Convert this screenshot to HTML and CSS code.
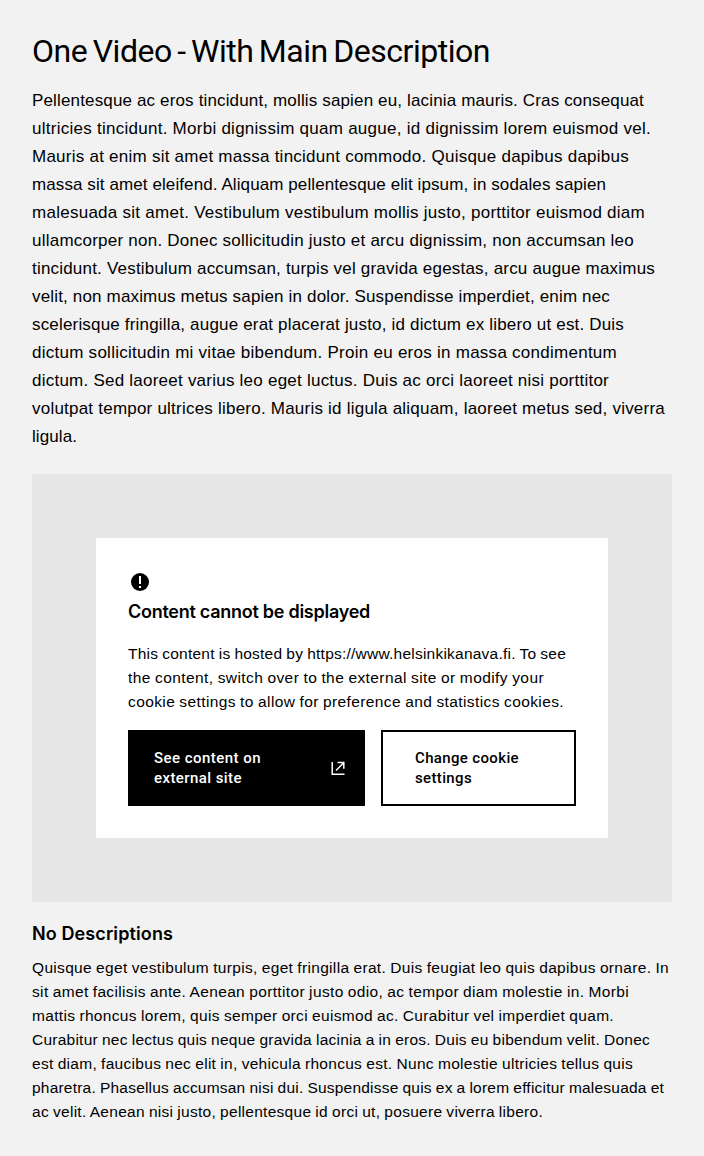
FILE: index.html
```
<!DOCTYPE html>
<html lang="en">
<head>
<meta charset="utf-8">
<title>One Video - With Main Description</title>
<link rel="stylesheet" href="styles.css">
</head>
<body>
<main class="page">
  <h1 class="title"><span class="line" data-width="458">One Video - With Main Description</span></h1>
  <p class="lead">
    <span class="line" data-width="612">Pellentesque ac eros tincidunt, mollis sapien eu, lacinia mauris. Cras consequat</span>
    <span class="line" data-width="619">ultricies tincidunt. Morbi dignissim quam augue, id dignissim lorem euismod vel.</span>
    <span class="line" data-width="597">Mauris at enim sit amet massa tincidunt commodo. Quisque dapibus dapibus</span>
    <span class="line" data-width="574">massa sit amet eleifend. Aliquam pellentesque elit ipsum, in sodales sapien</span>
    <span class="line" data-width="613">malesuada sit amet. Vestibulum vestibulum mollis justo, porttitor euismod diam</span>
    <span class="line" data-width="602">ullamcorper non. Donec sollicitudin justo et arcu dignissim, non accumsan leo</span>
    <span class="line" data-width="623">tincidunt. Vestibulum accumsan, turpis vel gravida egestas, arcu augue maximus</span>
    <span class="line" data-width="578">velit, non maximus metus sapien in dolor. Suspendisse imperdiet, enim nec</span>
    <span class="line" data-width="592">scelerisque fringilla, augue erat placerat justo, id dictum ex libero ut est. Duis</span>
    <span class="line" data-width="585">dictum sollicitudin mi vitae bibendum. Proin eu eros in massa condimentum</span>
    <span class="line" data-width="577">dictum. Sed laoreet varius leo eget luctus. Duis ac orci laoreet nisi porttitor</span>
    <span class="line" data-width="633">volutpat tempor ultrices libero. Mauris id ligula aliquam, laoreet metus sed, viverra</span>
    <span class="line" data-width="45">ligula.</span>
  </p>
  <section class="video">
    <div class="notice">
      <svg class="notice-icon" viewBox="0 0 24 24" aria-hidden="true"><circle cx="12" cy="12" r="9"/><path d="M11 6h2v8h-2zM11 16h2v2h-2z" fill="#fff"/></svg>
      <h2 class="notice-title"><span class="line" data-width="242">Content cannot be displayed</span></h2>
      <p class="text notice-text">
        <span class="line" data-width="438">This content is hosted by https://www.helsinkikanava.fi. To see</span>
        <span class="line" data-width="416">the content, switch over to the external site or modify your</span>
        <span class="line" data-width="436">cookie settings to allow for preference and statistics cookies.</span>
      </p>
      <div class="actions">
        <a class="button button-primary">
          <span class="label"><span class="line" data-width="107">See content on</span><span class="line" data-width="88">external site</span></span>
          <svg class="link-icon" viewBox="0 0 14 14" aria-hidden="true"><path d="M1.2 1v12.2h12.3M5 9.5l7.5-7.5M6.5 1.6h6.3v6.2"/></svg>
        </a>
        <button class="button button-secondary">
          <span class="label"><span class="line" data-width="104">Change cookie</span><span class="line" data-width="57">settings</span></span>
        </button>
      </div>
    </div>
  </section>
  <h2 class="subtitle"><span class="line" data-width="141">No Descriptions</span></h2>
  <p class="text">
    <span class="line" data-width="637">Quisque eget vestibulum turpis, eget fringilla erat. Duis feugiat leo quis dapibus ornare. In</span>
    <span class="line" data-width="597">sit amet facilisis ante. Aenean porttitor justo odio, ac tempor diam molestie in. Morbi</span>
    <span class="line" data-width="582">mattis rhoncus lorem, quis semper orci euismod ac. Curabitur vel imperdiet quam.</span>
    <span class="line" data-width="618">Curabitur nec lectus quis neque gravida lacinia a in eros. Duis eu bibendum velit. Donec</span>
    <span class="line" data-width="601">est diam, faucibus nec elit in, vehicula rhoncus est. Nunc molestie ultricies tellus quis</span>
    <span class="line" data-width="632">pharetra. Phasellus accumsan nisi dui. Suspendisse quis ex a lorem efficitur malesuada et</span>
    <span class="line" data-width="511">ac velit. Aenean nisi justo, pellentesque id orci ut, posuere viverra libero.</span>
  </p>
</main>
<script src="lines.js"></script>
</body>
</html>
```
FILE: styles.css
```
* { box-sizing: border-box; }
body {
  margin: 0;
  background: #f1f1f1;
  color: #000;
  font-family: "Liberation Sans", Arial, sans-serif;
}
.page { padding: 32px; height: 1156px; background: #f2f2f2; }
h1, h2, p { margin: 0; }
.line { display: block; width: max-content; white-space: nowrap; }
.title { font: 400 32px/38px Roboto, sans-serif; word-spacing: -2px; }
.lead { margin-top: 17px; font-size: 17px; line-height: 28px; }
.video { margin-top: 23px; padding: 64px; height: 428px; background: #e6e6e6; }
.notice { height: 300px; padding: 32px; background: #fff; }
.notice-icon { display: block; width: 24px; height: 24px; }
.notice-title { margin-top: 2px; font: 600 18px/32px Inter, sans-serif; }
.text { font-size: 15.5px; line-height: 24px; word-spacing: -0.5px; }
.notice-text { margin-top: 14px; }
.actions { display: flex; gap: 16px; margin-top: 16px; }
.button {
  display: flex;
  align-items: center;
  height: 76px;
  border: 2px solid #000;
  border-radius: 0;
  text-align: left;
  font: 500 15px/20px Roboto, sans-serif;
}
.button-primary { width: 237px; padding: 0 18px 0 24px; justify-content: space-between; background: #000; color: #fff; }
.button-secondary { width: 195px; padding: 0 32px; background: #fff; color: #000; }
.link-icon { width: 14px; height: 14px; fill: none; stroke: #fff; stroke-width: 1.5; }
.subtitle { margin-top: 16px; font: 600 18px/32px Inter, sans-serif; }
.subtitle + .text { margin-top: 6px; }
```
FILE: lines.js
```
document.querySelectorAll('.line').forEach(function (line) {
  var gap = Number(line.dataset.width) - line.getBoundingClientRect().width;
  line.style.letterSpacing = gap / line.textContent.length + 'px';
});
```
